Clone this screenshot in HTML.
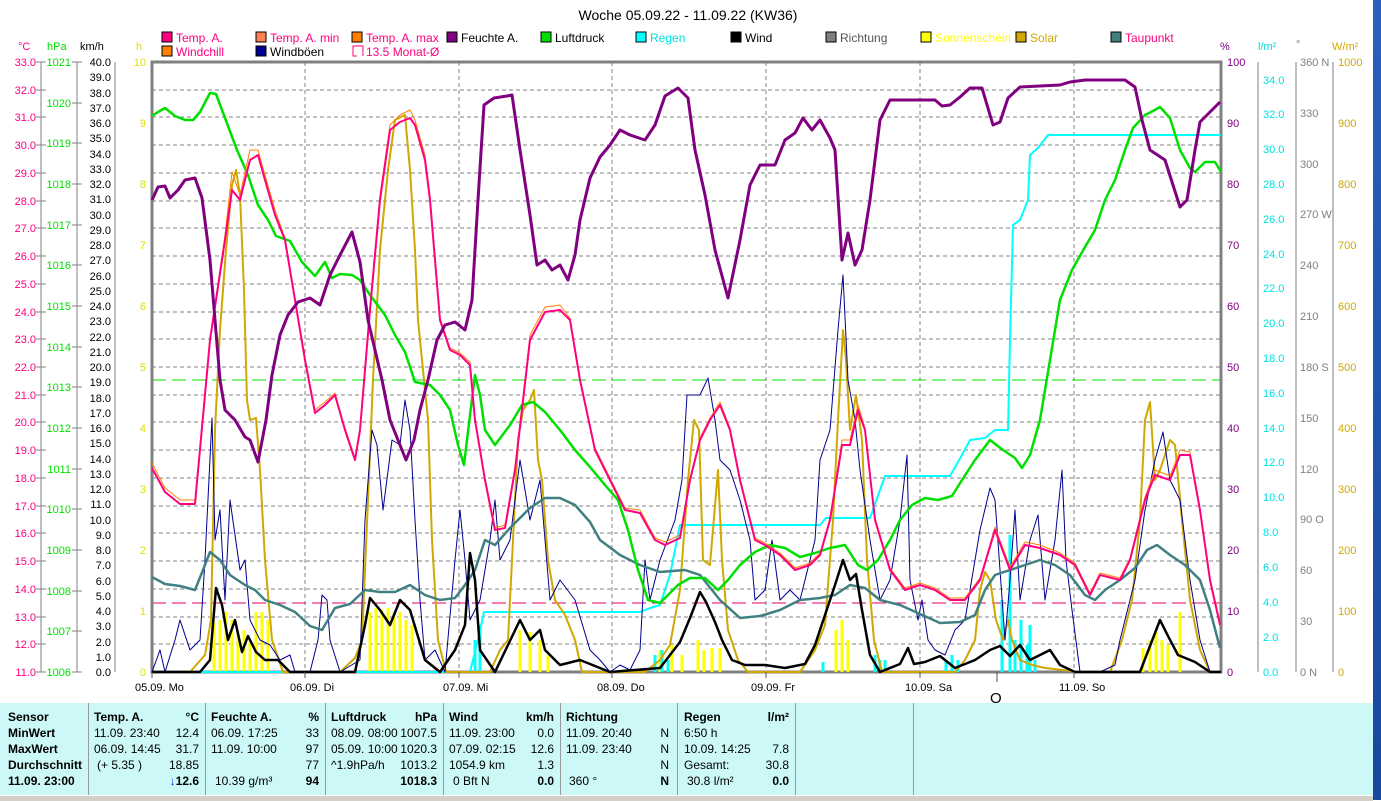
<!DOCTYPE html>
<html><head><meta charset="utf-8"><style>
body{margin:0;width:1381px;height:800px;overflow:hidden;background:#fff;font-family:"Liberation Sans",sans-serif;position:relative}
svg{position:absolute;left:0;top:0}
.tb{position:absolute;left:0;top:703px;width:1373px;height:92px;background:#ccf8f8}
.c{position:absolute;top:0;height:92px;border-right:1px solid #999;font-size:12px;font-family:"Liberation Sans Narrow","Liberation Sans",sans-serif;}
.c div{position:absolute;white-space:nowrap}
b{font-weight:bold}
</style></head><body>
<svg width="1381" height="800" font-family="Liberation Sans, sans-serif">
<text x="688" y="20" font-size="14" text-anchor="middle">Woche 05.09.22 - 11.09.22 (KW36)</text>
<g font-size="12">
<rect x="162" y="32" width="10" height="10" fill="#ff0080" stroke="#000"/><text x="176" y="42" fill="#ff0080">Temp. A.</text>
<rect x="256" y="32" width="10" height="10" fill="#ff8050" stroke="#000"/><text x="270" y="42" fill="#ff0080">Temp. A. min</text>
<rect x="352" y="32" width="10" height="10" fill="#ff8000" stroke="#000"/><text x="366" y="42" fill="#ff0080">Temp. A. max</text>
<rect x="447" y="32" width="10" height="10" fill="#800080" stroke="#000"/><text x="461" y="42" fill="#000">Feuchte A.</text>
<rect x="541" y="32" width="10" height="10" fill="#00e000" stroke="#000"/><text x="555" y="42" fill="#000">Luftdruck</text>
<rect x="636" y="32" width="10" height="10" fill="#00ffff" stroke="#000"/><text x="650" y="42" fill="#00e0e0">Regen</text>
<rect x="731" y="32" width="10" height="10" fill="#000" stroke="#000"/><text x="745" y="42" fill="#000">Wind</text>
<rect x="826" y="32" width="10" height="10" fill="#808080" stroke="#000"/><text x="840" y="42" fill="#555">Richtung</text>
<rect x="921" y="32" width="10" height="10" fill="#ffff00" stroke="#000"/><text x="935" y="42" fill="#ffff00">Sonnenschein</text>
<rect x="1016" y="32" width="10" height="10" fill="#d0a800" stroke="#000"/><text x="1030" y="42" fill="#d0a800">Solar</text>
<rect x="1111" y="32" width="10" height="10" fill="#408080" stroke="#000"/><text x="1125" y="42" fill="#ff0080">Taupunkt</text>
<rect x="162" y="46" width="10" height="10" fill="#ff8000" stroke="#000"/><text x="176" y="56" fill="#ff0080">Windchill</text>
<rect x="256" y="46" width="10" height="10" fill="#000090" stroke="#000"/><text x="270" y="56">Windböen</text>
<path d="M357 56h-4v-10h10v10" fill="none" stroke="#ff0080"/><text x="366" y="56" fill="#ff0080">13.5 Monat-Ø</text>
</g>
<g font-size="11">
<text x="18" y="50" fill="#ff0080">°C</text><text x="47" y="50" fill="#00e000">hPa</text><text x="80" y="50">km/h</text><text x="136" y="50" fill="#e0e000">h</text>
<text x="1220" y="50" fill="#800080">%</text><text x="1258" y="50" fill="#00e0e0">l/m²</text><text x="1296" y="48" fill="#808080">°</text><text x="1332" y="50" fill="#d0a800">W/m²</text>
</g>
<!-- axis lines -->
<g stroke="#808080" fill="none">
<path d="M41 62V672M77 62V672M115 62V672M1258 62V672M1296 62V672M1333 62V672"/>
</g>
<g fill="#ff0080" font-size="11" text-anchor="end">
<text x="36" y="66">33.0</text><text x="36" y="94">32.0</text><text x="36" y="121">31.0</text><text x="36" y="149">30.0</text><text x="36" y="177">29.0</text><text x="36" y="205">28.0</text><text x="36" y="232">27.0</text><text x="36" y="260">26.0</text><text x="36" y="288">25.0</text><text x="36" y="316">24.0</text><text x="36" y="343">23.0</text><text x="36" y="371">22.0</text><text x="36" y="399">21.0</text><text x="36" y="426">20.0</text><text x="36" y="454">19.0</text><text x="36" y="482">18.0</text><text x="36" y="510">17.0</text><text x="36" y="537">16.0</text><text x="36" y="565">15.0</text><text x="36" y="593">14.0</text><text x="36" y="621">13.0</text><text x="36" y="648">12.0</text><text x="36" y="676">11.0</text>
</g>
<g stroke="#808080"><path d="M36 62h10M36 90h10M36 117h10M36 145h10M36 173h10M36 201h10M36 228h10M36 256h10M36 284h10M36 312h10M36 339h10M36 367h10M36 395h10M36 422h10M36 450h10M36 478h10M36 506h10M36 533h10M36 561h10M36 589h10M36 617h10M36 644h10M36 672h10"/>
<path d="M72 62h10M72 103h10M72 143h10M72 184h10M72 225h10M72 265h10M72 306h10M72 347h10M72 387h10M72 428h10M72 469h10M72 509h10M72 550h10M72 591h10M72 631h10M72 672h10"/></g>
<g fill="#00e000" font-size="11" text-anchor="end">
<text x="71" y="66">1021</text><text x="71" y="107">1020</text><text x="71" y="147">1019</text><text x="71" y="188">1018</text><text x="71" y="229">1017</text><text x="71" y="269">1016</text><text x="71" y="310">1015</text><text x="71" y="351">1014</text><text x="71" y="391">1013</text><text x="71" y="432">1012</text><text x="71" y="473">1011</text><text x="71" y="513">1010</text><text x="71" y="554">1009</text><text x="71" y="595">1008</text><text x="71" y="635">1007</text><text x="71" y="676">1006</text>
</g>
<g font-size="11" text-anchor="end">
<text x="111" y="66">40.0</text><text x="111" y="81">39.0</text><text x="111" y="97">38.0</text><text x="111" y="112">37.0</text><text x="111" y="127">36.0</text><text x="111" y="142">35.0</text><text x="111" y="158">34.0</text><text x="111" y="173">33.0</text><text x="111" y="188">32.0</text><text x="111" y="203">31.0</text><text x="111" y="219">30.0</text><text x="111" y="234">29.0</text><text x="111" y="249">28.0</text><text x="111" y="264">27.0</text><text x="111" y="280">26.0</text><text x="111" y="295">25.0</text><text x="111" y="310">24.0</text><text x="111" y="325">23.0</text><text x="111" y="341">22.0</text><text x="111" y="356">21.0</text><text x="111" y="371">20.0</text><text x="111" y="386">19.0</text><text x="111" y="402">18.0</text><text x="111" y="417">17.0</text><text x="111" y="432">16.0</text><text x="111" y="447">15.0</text><text x="111" y="463">14.0</text><text x="111" y="478">13.0</text><text x="111" y="493">12.0</text><text x="111" y="508">11.0</text><text x="111" y="524">10.0</text><text x="111" y="539">9.0</text><text x="111" y="554">8.0</text><text x="111" y="569">7.0</text><text x="111" y="585">6.0</text><text x="111" y="600">5.0</text><text x="111" y="615">4.0</text><text x="111" y="630">3.0</text><text x="111" y="646">2.0</text><text x="111" y="661">1.0</text><text x="111" y="676">0.0</text>
</g>
<g fill="#e0e000" font-size="11" text-anchor="end">
<text x="146" y="66">10</text><text x="146" y="127">9</text><text x="146" y="188">8</text><text x="146" y="249">7</text><text x="146" y="310">6</text><text x="146" y="371">5</text><text x="146" y="432">4</text><text x="146" y="493">3</text><text x="146" y="554">2</text><text x="146" y="615">1</text><text x="146" y="676">0</text>
</g>
<g fill="#800080" font-size="11">
<text x="1227" y="66">100</text><text x="1227" y="127">90</text><text x="1227" y="188">80</text><text x="1227" y="249">70</text><text x="1227" y="310">60</text><text x="1227" y="371">50</text><text x="1227" y="432">40</text><text x="1227" y="493">30</text><text x="1227" y="554">20</text><text x="1227" y="615">10</text><text x="1227" y="676">0</text>
</g>
<g fill="#00e0e0" font-size="11">
<text x="1263" y="84">34.0</text><text x="1263" y="118">32.0</text><text x="1263" y="153">30.0</text><text x="1263" y="188">28.0</text><text x="1263" y="223">26.0</text><text x="1263" y="258">24.0</text><text x="1263" y="292">22.0</text><text x="1263" y="327">20.0</text><text x="1263" y="362">18.0</text><text x="1263" y="397">16.0</text><text x="1263" y="432">14.0</text><text x="1263" y="466">12.0</text><text x="1263" y="501">10.0</text><text x="1263" y="536">8.0</text><text x="1263" y="571">6.0</text><text x="1263" y="606">4.0</text><text x="1263" y="641">2.0</text><text x="1263" y="676">0.0</text>
</g>
<g fill="#808080" font-size="11">
<text x="1300" y="66">360 N</text><text x="1300" y="117">330</text><text x="1300" y="168">300</text><text x="1300" y="218">270 W</text><text x="1300" y="269">240</text><text x="1300" y="320">210</text><text x="1300" y="371">180 S</text><text x="1300" y="422">150</text><text x="1300" y="473">120</text><text x="1300" y="523">90 O</text><text x="1300" y="574">60</text><text x="1300" y="625">30</text><text x="1300" y="676">0 N</text>
</g>
<g fill="#d0a800" font-size="11">
<text x="1338" y="66">1000</text><text x="1338" y="127">900</text><text x="1338" y="188">800</text><text x="1338" y="249">700</text><text x="1338" y="310">600</text><text x="1338" y="371">500</text><text x="1338" y="432">400</text><text x="1338" y="493">300</text><text x="1338" y="554">200</text><text x="1338" y="615">100</text><text x="1338" y="676">0</text>
</g>
<!-- grid -->
<g stroke="#808080" stroke-dasharray="4,3" fill="none">
<path d="M152 90H1221M152 117H1221M152 145H1221M152 173H1221M152 201H1221M152 228H1221M152 256H1221M152 284H1221M152 312H1221M152 339H1221M152 367H1221M152 395H1221M152 422H1221M152 450H1221M152 478H1221M152 506H1221M152 533H1221M152 561H1221M152 589H1221M152 617H1221M152 644H1221"/>
<path d="M305 62V672M459 62V672M612 62V672M766 62V672M920 62V672M1074 62V672"/>
</g>
<path d="M152 380H1221" stroke="#00e000" stroke-dasharray="14,6"/>
<path d="M152 603H1221" stroke="#e0006a" stroke-dasharray="14,6"/>
<rect x="152" y="62" width="1069" height="610" fill="none" stroke="#808080" stroke-width="3"/>
<!-- sunshine bars -->
<g stroke="#ffff00" stroke-width="3">
<path d="M214 672V622M220 672V620M226 672V612M232 672V620M238 672V632M244 672V630M250 672V642M256 672V612M262 672V612M268 672V620M370 672V612M376 672V608M382 672V610M388 672V608M394 672V612M400 672V612M406 672V620M412 672V625M520 672V630M530 672V632M540 672V640M548 672V655M660 672V650M672 672V645M682 672V655M698 672V640M704 672V650M712 672V648M720 672V648M836 672V630M842 672V620M848 672V640M1143 672V648M1150 672V640M1156 672V630M1162 672V640M1168 672V645M1180 672V612"/>
</g>
<!-- rain bars -->
<g stroke="#00ffff" stroke-width="3">
<path d="M475 672V640M480 672V625M655 672V655M662 672V650M668 672V660M823 672V662M875 672V655M880 672V660M885 672V660M946 672V660M952 672V655M958 672V660M1002 672V600M1010 672V535M1015 672V640M1021 672V620M1027 672V645M1030 672V625M1035 672V660"/>
</g>
<g fill="none" stroke-linejoin="round">
<!-- rain cumulative -->
<polyline stroke="#00ffff" stroke-width="2" points="152,672 470,672 478,640 484,612 640,612 650,608 660,605 670,575 680,525 820,525 826,518 870,518 880,490 885,476 950,476 962,455 970,440 985,438 995,430 1008,430 1010,340 1013,225 1020,220 1028,200 1030,155 1038,148 1048,135 1221,135"/>
<!-- solar -->
<polyline stroke="#d0a800" stroke-width="2" points="152,672 190,672 205,655 211,620 215,430 220,330 226,250 232,185 236,170 240,195 244,290 247,400 250,420 256,418 260,470 265,560 272,640 283,672 340,672 355,658 362,640 368,500 373,380 380,250 388,170 395,120 405,115 410,170 415,250 418,320 422,360 428,420 432,540 438,640 446,672 490,672 500,650 508,640 513,540 518,440 523,410 530,400 534,390 538,460 542,480 548,560 555,600 565,615 575,640 582,672 645,672 660,660 670,645 680,590 688,480 694,420 699,430 703,560 710,565 718,470 722,560 728,630 738,660 748,672 800,672 815,650 825,625 833,520 838,420 843,330 846,360 850,430 856,395 862,440 867,560 874,640 882,672 955,672 965,660 975,640 980,590 985,572 990,580 996,620 1003,640 1008,620 1012,640 1020,660 1032,665 1045,668 1080,672 1110,672 1122,640 1132,600 1140,520 1145,420 1150,402 1155,480 1160,470 1165,455 1170,440 1175,445 1182,520 1190,600 1200,650 1210,672 1221,672"/>
<!-- gusts -->
<polyline stroke="#000090" stroke-width="1" points="152,672 160,650 165,672 175,640 180,620 190,650 200,640 205,560 212,418 215,540 220,510 225,600 230,500 235,535 240,570 245,560 250,620 260,640 270,645 280,660 290,655 295,672 310,672 318,640 322,595 327,600 330,640 340,672 360,660 365,520 372,430 377,445 383,510 392,440 400,445 405,400 410,430 415,520 420,600 425,660 435,650 445,672 455,560 460,510 465,560 470,620 480,600 490,540 495,500 500,560 510,540 520,460 530,520 540,480 545,540 550,600 560,580 575,600 590,650 600,660 610,672 620,665 630,670 640,650 645,560 650,600 660,560 675,520 682,480 687,395 700,395 708,378 715,420 720,460 730,470 740,500 750,540 755,600 765,590 772,540 780,600 790,590 800,600 815,540 820,460 830,430 838,330 843,275 848,380 855,420 860,470 870,540 880,600 890,580 900,520 907,455 910,580 918,620 922,600 928,640 935,650 945,655 955,630 965,620 975,560 980,530 990,488 995,500 1000,570 1005,640 1010,580 1015,510 1020,600 1030,540 1038,515 1045,600 1055,540 1062,470 1066,560 1072,610 1080,672 1100,672 1115,665 1120,640 1135,580 1145,510 1155,460 1163,432 1170,480 1180,500 1190,580 1200,640 1210,672 1221,672"/>
<!-- dewpoint -->
<polyline stroke="#408080" stroke-width="2.5" points="152,577 165,584 180,586 195,590 203,570 210,552 220,560 230,575 245,585 255,590 265,600 280,605 295,612 310,626 322,630 335,608 350,604 365,590 380,592 395,592 410,585 425,595 440,600 455,598 465,585 475,570 485,540 495,545 510,528 530,508 545,498 560,498 575,505 590,522 600,540 620,555 640,565 660,572 685,570 700,575 720,600 740,618 760,616 780,610 800,600 820,598 835,595 850,585 865,588 880,600 900,605 920,614 940,623 960,622 975,615 985,590 995,575 1010,570 1025,565 1040,560 1055,565 1070,575 1085,595 1095,600 1105,590 1120,580 1135,568 1147,550 1157,545 1170,555 1185,565 1200,580 1210,610 1220,648"/>
<!-- wind -->
<polyline stroke="#000" stroke-width="2.5" points="152,672 200,672 210,660 216,588 222,605 228,640 235,620 242,652 248,636 256,652 265,660 278,660 290,672 355,672 365,625 370,598 380,610 390,625 400,600 410,610 425,660 440,672 455,650 465,625 470,553 475,580 480,650 495,672 520,620 530,640 540,630 545,650 560,665 580,660 610,672 660,668 680,642 690,618 700,592 706,602 715,622 722,640 732,660 745,665 765,665 785,668 805,664 815,645 825,615 835,585 843,560 850,580 856,574 862,610 870,655 880,672 900,664 908,648 914,664 925,662 940,656 955,668 975,660 990,650 1000,646 1010,656 1020,645 1030,660 1050,650 1060,665 1075,672 1140,672 1150,646 1160,620 1168,636 1178,655 1195,662 1210,672 1221,672"/>
<!-- pressure -->
<polyline stroke="#00e000" stroke-width="2.5" points="152,116 158,112 165,108 175,116 185,120 193,120 200,112 210,93 216,94 225,118 237,150 248,175 258,205 268,220 276,236 290,241 302,262 315,276 325,262 332,278 340,274 352,275 360,280 370,295 385,315 395,335 405,352 415,382 430,385 440,395 450,410 458,445 464,465 470,415 475,375 480,395 485,430 495,445 510,425 522,405 533,402 545,412 560,430 575,450 590,467 605,485 618,500 628,530 638,570 648,600 660,603 668,595 678,585 690,578 705,578 718,590 728,580 740,565 755,552 770,545 785,548 800,557 815,553 830,548 845,545 858,565 867,570 878,560 890,540 900,520 912,505 925,498 938,500 952,496 962,480 975,460 990,440 1003,450 1015,458 1022,468 1030,455 1040,420 1050,360 1060,300 1072,270 1085,247 1095,230 1105,200 1115,180 1125,150 1133,128 1145,115 1153,111 1160,107 1170,118 1180,150 1190,168 1195,172 1205,162 1215,162 1221,172"/>
<!-- temp max/min thin -->
<polyline stroke="#ff8000" stroke-width="1" points="152,463 165,488 180,500 195,500 210,338 225,235 232,172 240,195 250,150 258,150 265,175 275,210 285,238 295,298 305,358 315,410 325,402 335,393 345,428 355,458 360,428 370,305 380,195 390,125 400,115 410,110 415,120 425,155 430,195 440,318 450,348 460,353 470,362 475,418 485,478 495,528 505,525 515,467 530,335 545,307 560,305 570,318 580,378 595,448 610,478 625,508 640,510 655,538 665,542 680,535 690,478 700,438 710,418 720,402 730,428 740,478 755,538 765,543 780,553 795,568 810,563 820,553 830,518 842,440 850,440 858,405 865,428 875,518 890,568 905,588 920,583 935,588 950,598 965,598 980,578 995,527 1010,567 1025,542 1040,545 1060,553 1075,563 1090,593 1100,573 1120,578 1130,558 1145,497 1155,470 1170,476 1180,450 1190,452 1200,508 1210,578 1220,622"/>
<!-- temp -->
<polyline stroke="#ff0080" stroke-width="2" points="152,468 165,492 180,504 195,504 210,340 225,240 232,190 240,200 250,160 258,155 265,180 275,215 285,240 295,300 305,360 315,413 325,405 335,395 345,430 355,460 360,430 370,310 380,200 390,130 400,122 410,118 415,125 425,160 430,200 440,320 450,350 460,355 470,365 475,420 485,480 495,530 505,528 515,470 530,340 545,312 560,310 570,320 580,380 595,450 610,480 625,510 640,513 655,540 665,545 680,538 690,480 700,440 710,420 720,405 730,430 740,480 755,540 765,545 780,555 795,570 810,565 820,555 830,520 842,445 850,445 858,410 865,430 875,520 890,570 905,590 920,585 935,590 950,600 965,600 980,580 995,530 1010,570 1025,545 1040,548 1060,555 1075,565 1090,595 1100,575 1120,580 1130,560 1145,500 1155,475 1170,480 1180,455 1190,455 1200,510 1210,580 1220,625"/>
<!-- humidity -->
<polyline stroke="#800080" stroke-width="3" points="152,200 158,187 165,186 170,198 178,190 185,180 195,178 202,198 210,260 215,320 220,380 225,410 235,420 245,437 250,440 258,462 266,420 272,375 280,335 288,315 298,302 310,298 320,305 330,275 340,255 352,232 360,262 368,320 375,350 382,380 390,420 398,440 406,460 414,440 420,410 428,380 437,340 445,325 455,322 465,330 472,300 478,200 484,105 494,98 507,96 512,95 520,150 530,215 537,265 545,260 552,270 560,265 568,280 575,255 580,220 590,178 600,157 610,145 620,130 630,135 645,140 655,125 665,96 678,88 688,98 695,150 705,195 715,250 728,298 740,240 750,185 760,165 775,165 785,140 795,133 803,118 812,130 820,120 830,138 835,150 842,260 848,233 855,265 862,250 870,200 880,120 890,100 935,100 942,106 950,105 960,97 970,88 982,88 993,125 1000,122 1008,98 1020,87 1060,85 1070,82 1085,80 1125,80 1135,87 1142,120 1150,150 1165,160 1180,207 1187,200 1195,150 1200,122 1210,112 1220,102"/>
</g>
<!-- x labels -->
<g font-size="11">
<path d="M152 672v6M305 672v6M459 672v6M612 672v6M766 672v6M920 672v6M1074 672v6M997 672v10" stroke="#555"/>
<text x="135" y="691">05.09.  Mo</text><text x="290" y="691">06.09.  Di</text><text x="443" y="691">07.09.  Mi</text><text x="597" y="691">08.09.  Do</text><text x="751" y="691">09.09.  Fr</text><text x="905" y="691">10.09.  Sa</text><text x="1059" y="691">11.09.  So</text>
</g>
<text x="990" y="703" font-size="15">O</text>
</svg>
<div style="position:absolute;left:1373px;top:0;width:8px;height:800px;background:linear-gradient(#2a60c0,#1848a0)"></div>
<div class="tb">
<div class="c" style="left:0;width:88px"><div style="left:8px;top:7px"><b>Sensor</b></div><div style="left:8px;top:23px"><b>MinWert</b></div><div style="left:8px;top:39px"><b>MaxWert</b></div><div style="left:8px;top:55px"><b>Durchschnitt</b></div><div style="left:8px;top:71px"><b>11.09. 23:00</b></div></div>
<div class="c" style="left:89px;width:116px"><div style="left:5px;top:7px"><b>Temp. A.</b></div><div style="right:6px;top:7px"><b>°C</b></div><div style="left:5px;top:23px">11.09.  23:40</div><div style="right:6px;top:23px">12.4</div><div style="left:5px;top:39px">06.09.  14:45</div><div style="right:6px;top:39px">31.7</div><div style="left:8px;top:55px">(+ 5.35 )</div><div style="right:6px;top:55px">18.85</div><div style="right:6px;top:71px"><b><span style="color:#0030ff">↓</span>12.6</b></div></div>
<div class="c" style="left:206px;width:119px"><div style="left:5px;top:7px"><b>Feuchte A.</b></div><div style="right:6px;top:7px"><b>%</b></div><div style="left:5px;top:23px">06.09.  17:25</div><div style="right:6px;top:23px">33</div><div style="left:5px;top:39px">11.09.  10:00</div><div style="right:6px;top:39px">97</div><div style="right:6px;top:55px">77</div><div style="left:9px;top:71px">10.39 g/m³</div><div style="right:6px;top:71px"><b>94</b></div></div>
<div class="c" style="left:326px;width:117px"><div style="left:5px;top:7px"><b>Luftdruck</b></div><div style="right:6px;top:7px"><b>hPa</b></div><div style="left:5px;top:23px">08.09.  08:00</div><div style="right:6px;top:23px">1007.5</div><div style="left:5px;top:39px">05.09.  10:00</div><div style="right:6px;top:39px">1020.3</div><div style="left:5px;top:55px">^1.9hPa/h</div><div style="right:6px;top:55px">1013.2</div><div style="right:6px;top:71px"><b>1018.3</b></div></div>
<div class="c" style="left:444px;width:116px"><div style="left:5px;top:7px"><b>Wind</b></div><div style="right:6px;top:7px"><b>km/h</b></div><div style="left:5px;top:23px">11.09.  23:00</div><div style="right:6px;top:23px">0.0</div><div style="left:5px;top:39px">07.09.  02:15</div><div style="right:6px;top:39px">12.6</div><div style="left:5px;top:55px">1054.9 km</div><div style="right:6px;top:55px">1.3</div><div style="left:9px;top:71px">0 Bft N</div><div style="right:6px;top:71px"><b>0.0</b></div></div>
<div class="c" style="left:561px;width:116px"><div style="left:5px;top:7px"><b>Richtung</b></div><div style="left:5px;top:23px">11.09.  20:40</div><div style="right:8px;top:23px">N</div><div style="left:5px;top:39px">11.09.  23:40</div><div style="right:8px;top:39px">N</div><div style="right:8px;top:55px">N</div><div style="left:8px;top:71px">360 °</div><div style="right:8px;top:71px"><b>N</b></div></div>
<div class="c" style="left:678px;width:117px"><div style="left:6px;top:7px"><b>Regen</b></div><div style="right:6px;top:7px"><b>l/m²</b></div><div style="left:6px;top:23px">6:50 h</div><div style="left:6px;top:39px">10.09.  14:25</div><div style="right:6px;top:39px">7.8</div><div style="left:6px;top:55px">Gesamt:</div><div style="right:6px;top:55px">30.8</div><div style="left:9px;top:71px">30.8 l/m²</div><div style="right:6px;top:71px"><b>0.0</b></div></div>
<div class="c" style="left:796px;width:117px"></div>
</div>
<div style="position:absolute;left:0;top:795px;width:1373px;height:5px;background:#d4d0c8;border-top:1px solid #fff"></div>
</body></html>
